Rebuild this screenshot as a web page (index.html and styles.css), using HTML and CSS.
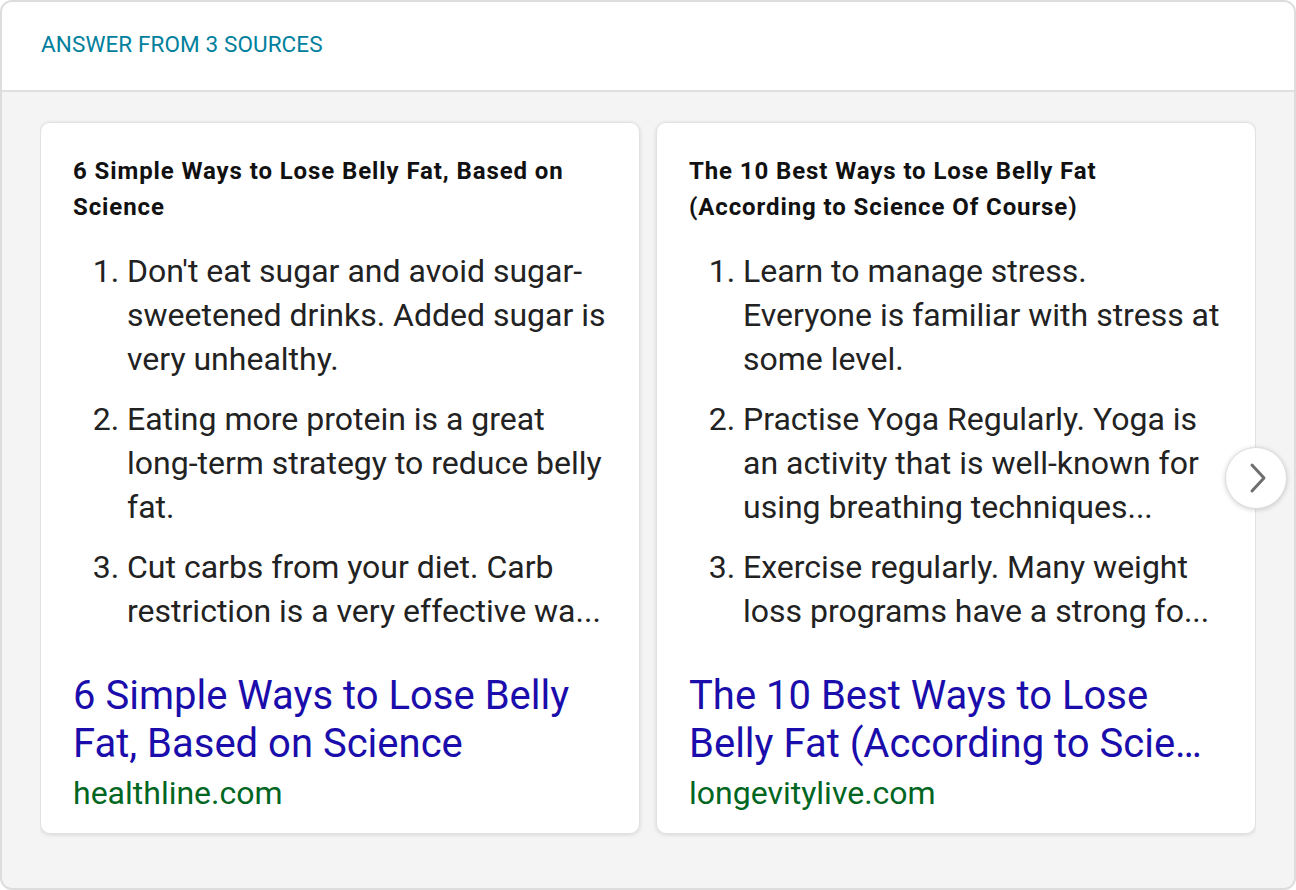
FILE: index.html
```html
<!DOCTYPE html>
<html lang="en">
<head>
<meta charset="utf-8">
<title>Answer from 3 sources</title>
<link rel="stylesheet" href="styles.css">
</head>
<body>
<section class="panel">
  <header class="panel-head">ANSWER FROM 3 SOURCES</header>
  <div class="panel-body">
    <div class="viewport">
      <div class="track">
        <article class="card">
          <h3 class="card-title">6 Simple Ways to Lose Belly Fat, Based on Science</h3>
          <ol class="card-list">
            <li>Don't eat sugar and avoid sugar-sweetened drinks. Added sugar is very unhealthy.</li>
            <li>Eating more protein is a great long-term strategy to reduce belly fat.</li>
            <li>Cut carbs from your diet. Carb restriction is a very effective wa...</li>
          </ol>
          <div class="card-source">
            <a class="source-title" href="#">6 Simple Ways to Lose Belly Fat, Based on Science</a>
            <div class="source-domain">healthline.com</div>
          </div>
        </article>
        <article class="card">
          <h3 class="card-title">The 10 Best Ways to Lose Belly Fat (According to Science Of Course)</h3>
          <ol class="card-list">
            <li>Learn to manage stress. Everyone is familiar with stress at some level.</li>
            <li>Practise Yoga Regularly. Yoga is an activity that is well-known for using breathing techniques...</li>
            <li>Exercise regularly. Many weight loss programs have a strong fo...</li>
          </ol>
          <div class="card-source">
            <a class="source-title" href="#" title="The 10 Best Ways to Lose Belly Fat (According to Science Of Course)">The 10 Best Ways to Lose Belly Fat (According to Scie…</a>
            <div class="source-domain">longevitylive.com</div>
          </div>
        </article>
      </div>
    </div>
    <button class="next-btn" aria-label="Next">
      <svg width="18" height="32" viewBox="0 0 18 32" aria-hidden="true"><path d="M3 3 L15 16 L3 29" fill="none" stroke="#6f6f6f" stroke-width="3" stroke-linecap="round" stroke-linejoin="round"/></svg>
    </button>
  </div>
</section>
</body>
</html>
```

FILE: styles.css
```css
* { box-sizing: border-box; }

html, body {
  margin: 0;
  padding: 0;
  background: #ffffff;
}

body {
  font-family: Roboto, "Liberation Sans", Arial, sans-serif;
  color: #222222;
}

.panel {
  width: 1296px;
  height: 890px;
  border: 2px solid #dddddd;
  border-radius: 12px;
  overflow: hidden;
  background: #f4f4f4;
  display: flex;
  flex-direction: column;
}

.panel-head {
  height: 90px;
  flex: 0 0 auto;
  background: #ffffff;
  border-bottom: 2px solid #e0e0e0;
  padding: 0 0 5px 39px;
  display: flex;
  align-items: center;
  font-size: 22.5px;
  letter-spacing: 0.1px;
  color: #00809d;
}

.panel-body {
  position: relative;
  flex: 1 1 auto;
  padding: 30px 38px 0 38px;
}

.viewport {
  overflow-x: clip;
}

.track {
  display: flex;
  gap: 16px;
}

.card {
  flex: 0 0 600px;
  height: 712px;
  background: #ffffff;
  border: 1px solid #e2e2e2;
  border-radius: 10px;
  box-shadow: 0 1px 4px rgba(0, 0, 0, 0.12);
  padding: 30px 33px 22px 32px;
  display: flex;
  flex-direction: column;
}

.card-title {
  margin: 0;
  font-size: 24px;
  line-height: 36px;
  font-weight: 700;
  letter-spacing: 0.9px;
  color: #111111;
}

.card-list {
  margin: 24px 0 0 0;
  padding-left: 54px;
  font-size: 32px;
  line-height: 44px;
  color: #222222;
}

.card-list li {
  margin-bottom: 16px;
}

.card-list li:last-child {
  margin-bottom: 0;
}

.card-source {
  margin-top: auto;
}

.source-title {
  display: -webkit-box;
  -webkit-box-orient: vertical;
  -webkit-line-clamp: 2;
  overflow: hidden;
  font-size: 40px;
  line-height: 48px;
  color: #1a0dab;
  text-decoration: none;
}

.source-domain {
  margin-top: 7px;
  font-size: 32px;
  line-height: 36px;
  color: #006621;
}

.next-btn {
  position: absolute;
  right: 7px;
  top: 355px;
  width: 62px;
  height: 62px;
  border-radius: 50%;
  border: 1px solid #dddddd;
  background: #ffffff;
  box-shadow: 0 1px 5px rgba(0, 0, 0, 0.18);
  padding: 0 0 0 4px;
  display: flex;
  align-items: center;
  justify-content: center;
  cursor: pointer;
}
```
